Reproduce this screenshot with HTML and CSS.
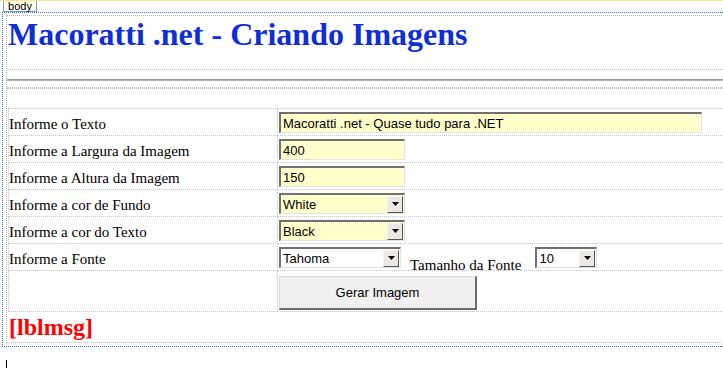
FILE: index.html
```html
<!DOCTYPE html>
<html lang="pt-BR">
<head>
    <meta charset="UTF-8">
    <title>Macoratti .net - Criando Imagens</title>
    <link rel="stylesheet" href="styles.css">
</head>
<body>
    <div class="design-bar"><span class="tag">body</span></div>

    <div class="frame">
        <div class="page">
            <div class="title-box">
                <h1 class="title">Macoratti .net - Criando Imagens</h1>
            </div>
            <hr class="rule">
            <div class="gap"></div>

            <table class="form-table">
                <tr>
                    <td class="label-cell">Informe o Texto</td>
                    <td><input type="text" class="field w-wide" value="Macoratti .net - Quase tudo para .NET"></td>
                </tr>
                <tr>
                    <td class="label-cell">Informe a Largura da Imagem</td>
                    <td><input type="text" class="field w-std" value="400"></td>
                </tr>
                <tr>
                    <td class="label-cell">Informe a Altura da Imagem</td>
                    <td><input type="text" class="field w-std" value="150"></td>
                </tr>
                <tr>
                    <td class="label-cell">Informe a cor de Fundo</td>
                    <td>
                        <div class="combo combo-yellow w-std">
                            <span class="combo-text">White</span>
                            <span class="combo-btn"><svg width="7" height="4" viewBox="0 0 7 4"><path d="M0 0h7L3.5 4z" fill="#000"/></svg></span>
                        </div>
                    </td>
                </tr>
                <tr>
                    <td class="label-cell">Informe a cor do Texto</td>
                    <td>
                        <div class="combo combo-yellow w-std">
                            <span class="combo-text">Black</span>
                            <span class="combo-btn"><svg width="7" height="4" viewBox="0 0 7 4"><path d="M0 0h7L3.5 4z" fill="#000"/></svg></span>
                        </div>
                    </td>
                </tr>
                <tr>
                    <td class="label-cell">Informe a Fonte</td>
                    <td>
                        <div class="font-row">
                            <div class="combo w-font">
                                <span class="combo-text">Tahoma</span>
                                <span class="combo-btn"><svg width="7" height="4" viewBox="0 0 7 4"><path d="M0 0h7L3.5 4z" fill="#000"/></svg></span>
                            </div>
                            <span class="size-label">Tamanho da Fonte</span>
                            <div class="combo w-size">
                                <span class="combo-text">10</span>
                                <span class="combo-btn"><svg width="7" height="4" viewBox="0 0 7 4"><path d="M0 0h7L3.5 4z" fill="#000"/></svg></span>
                            </div>
                        </div>
                    </td>
                </tr>
                <tr class="button-row">
                    <td class="label-cell"></td>
                    <td><button type="button" class="btn">Gerar Imagem</button></td>
                </tr>
            </table>

            <div class="msg-box">[lblmsg]</div>
        </div>
    </div>

    <div class="caret"></div>
</body>
</html>
```

FILE: styles.css
```css
html, body {
    margin: 0;
}

body {
    background-color: #fff;
    font-family: "Liberation Serif", serif;
    color: #000;
    overflow: hidden;
}

/* designer tag strip */
.design-bar {
    height: 11px;
    border-top: 1px solid #f8e88c;
}

.tag {
    display: block;
    width: 32px;
    height: 10px;
    margin-left: 3px;
    border: 1px solid #6b9ddf;
    border-top: 0;
    background-color: #fffbe6;
    font: 11px/10px "Liberation Sans", sans-serif;
    text-align: center;
}

.frame {
    margin: 0 -20px 0 2px;
    padding: 2px 2px 3px 3px;
    border: 1px dotted #316ac5;
}

.page {
    border: 1px dotted #bdbdbd;
}

.title-box {
    padding: 0 0 16px 1px;
    border-bottom: 1px dotted #bdbdbd;
}

.title {
    margin: 0;
    font: bold 32px/37px "Liberation Serif", serif;
    color: #0f2fd4;
}

.rule {
    height: 2px;
    margin: 9px 0 6px;
    border: 0;
    border-top: 1px solid #999;
    background-color: #b4b4b4;
    box-sizing: border-box;
}

.gap {
    height: 0;
    margin-bottom: 19px;
    border-top: 1px dotted #bdbdbd;
    border-bottom: 1px dotted #bdbdbd;
}

/* form table */
.form-table {
    border-collapse: collapse;
    margin-left: 1px;
    width: calc(100% - 1px);
}

.form-table td {
    border: 1px dotted #c4c4c4;
    padding: 3px 1px 2px;
    vertical-align: middle;
}

.form-table .label-cell {
    width: 267px;
    padding: 0 1px 2px 0;
    font-size: 15px;
    line-height: 17px;
    white-space: nowrap;
    vertical-align: bottom;
}

.button-row td {
    padding: 5px 1px 1px;
}

.field,
.combo {
    display: block;
    box-sizing: border-box;
    height: 21px;
    margin: 0;
    border-style: solid;
    border-width: 2px 1px 1px 2px;
    border-color: #707070 #e2e2e2 #e2e2e2 #707070;
    background-color: #fff;
    font: 13px "Liberation Sans", sans-serif;
    color: #000;
}

.field {
    padding: 0 2px;
    background-color: #ffffcc;
    outline: none;
}

.combo {
    display: flex;
    align-items: center;
}

.combo-yellow {
    background-color: #ffffcc;
}

.combo-text {
    flex: 1;
    padding-left: 2px;
    white-space: nowrap;
}

.combo-btn {
    display: flex;
    align-items: center;
    justify-content: center;
    box-sizing: border-box;
    width: 16px;
    height: 17px;
    margin-right: 1px;
    border: 1px solid;
    border-color: #f4f4f4 #555 #555 #f4f4f4;
    background-color: #ece9e4;
}

.w-wide { width: 423px; }
.w-std { width: 126px; }
.w-font { width: 122px; }
.w-size { width: 62px; }

.font-row {
    display: flex;
    align-items: flex-start;
    height: 21px;
}

.size-label {
    margin: 0 14px 0 9px;
    padding-top: 10px;
    font-size: 15px;
    line-height: 17px;
    white-space: nowrap;
}

.btn {
    display: block;
    box-sizing: border-box;
    width: 198px;
    height: 34px;
    border-style: solid;
    border-width: 1px 2px 2px 1px;
    border-color: #dcdcdc #6a6a6a #6a6a6a #dcdcdc;
    background-color: #f0f0f0;
    font: 13px "Liberation Sans", sans-serif;
    color: #000;
    cursor: pointer;
}

.msg-box {
    padding: 2px 0 1px 2px;
    font: bold 24px/27px "Liberation Serif", serif;
    color: #ff0000;
}

.caret {
    width: 1px;
    height: 8px;
    margin: 13px 0 0 6px;
    background-color: #000;
}
```
